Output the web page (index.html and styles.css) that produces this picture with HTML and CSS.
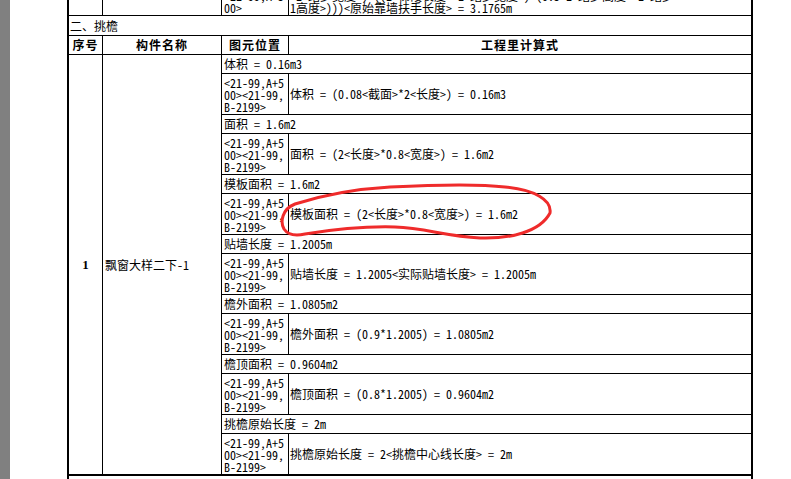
FILE: index.html
```html
<!DOCTYPE html>
<html lang="zh-CN">
<head>
<meta charset="utf-8">
<title>工程量计算式</title>
<link rel="stylesheet" href="styles.css">
</head>
<body>
<div class="screen">
  <div class="gutter"></div>
  <div class="page">
    <table class="sheet">
      <colgroup>
        <col class="c-no">
        <col class="c-name">
        <col class="c-pos">
        <col class="c-calc">
      </colgroup>
      <tbody>
        <tr class="row-prev">
          <td></td>
          <td></td>
          <td class="prev-pos">&lt;21-99,A+5<br>00&gt;</td>
          <td class="prev-calc last">*1&lt;踏步宽度&gt;)+((1&lt;梯段长度&gt;*1&lt;踏步宽度&gt;)+(0.5*1&lt;踏步高度&gt;*1&lt;踏步<br>1高度&gt;)))&lt;原始靠墙扶手长度&gt; = 3.1765m</td>
        </tr>
        <tr class="row-section">
          <td class="last" colspan="4">二、挑檐</td>
        </tr>
        <tr class="row-head">
          <td>序号</td>
          <td>构件名称</td>
          <td>图元位置</td>
          <td class="last">工程里计算式</td>
        </tr>
        <tr class="row-sum">
          <td class="item-no" rowspan="14">1</td>
          <td class="item-name" rowspan="14">飘窗大样二下-1</td>
          <td class="last" colspan="2">体积 = 0.16m3</td>
        </tr>
        <tr class="row-detail">
          <td class="pos">&lt;21-99,A+5<br>00&gt;&lt;21-99,<br>B-2199&gt;</td>
          <td class="calc last">体积 = (0.08&lt;截面&gt;*2&lt;长度&gt;) = 0.16m3</td>
        </tr>
        <tr class="row-sum">
          <td class="last" colspan="2">面积 = 1.6m2</td>
        </tr>
        <tr class="row-detail">
          <td class="pos">&lt;21-99,A+5<br>00&gt;&lt;21-99,<br>B-2199&gt;</td>
          <td class="calc last">面积 = (2&lt;长度&gt;*0.8&lt;宽度&gt;) = 1.6m2</td>
        </tr>
        <tr class="row-sum">
          <td class="last" colspan="2">模板面积 = 1.6m2</td>
        </tr>
        <tr class="row-detail">
          <td class="pos">&lt;21-99,A+5<br>00&gt;&lt;21-99,<br>B-2199&gt;</td>
          <td class="calc last">模板面积 = (2&lt;长度&gt;*0.8&lt;宽度&gt;) = 1.6m2</td>
        </tr>
        <tr class="row-sum">
          <td class="last" colspan="2">贴墙长度 = 1.2005m</td>
        </tr>
        <tr class="row-detail">
          <td class="pos">&lt;21-99,A+5<br>00&gt;&lt;21-99,<br>B-2199&gt;</td>
          <td class="calc last">贴墙长度 = 1.2005&lt;实际贴墙长度&gt; = 1.2005m</td>
        </tr>
        <tr class="row-sum">
          <td class="last" colspan="2">檐外面积 = 1.0805m2</td>
        </tr>
        <tr class="row-detail">
          <td class="pos">&lt;21-99,A+5<br>00&gt;&lt;21-99,<br>B-2199&gt;</td>
          <td class="calc last">檐外面积 = (0.9*1.2005) = 1.0805m2</td>
        </tr>
        <tr class="row-sum">
          <td class="last" colspan="2">檐顶面积 = 0.9604m2</td>
        </tr>
        <tr class="row-detail">
          <td class="pos">&lt;21-99,A+5<br>00&gt;&lt;21-99,<br>B-2199&gt;</td>
          <td class="calc last">檐顶面积 = (0.8*1.2005) = 0.9604m2</td>
        </tr>
        <tr class="row-sum">
          <td class="last" colspan="2">挑檐原始长度 = 2m</td>
        </tr>
        <tr class="row-detail">
          <td class="pos">&lt;21-99,A+5<br>00&gt;&lt;21-99,<br>B-2199&gt;</td>
          <td class="calc last">挑檐原始长度 = 2&lt;挑檐中心线长度&gt; = 2m</td>
        </tr>
        <tr class="row-section row-next">
          <td class="last" colspan="4">三、阳台栏板</td>
        </tr>
      </tbody>
    </table>
  </div>
  <svg class="ink" width="791" height="479" viewBox="0 0 791 479" aria-hidden="true">
    <path d="M 550 213 C 552 200, 535 190, 505 187 C 480 184, 430 185, 390 187 C 355 189, 320 196, 295 204 C 282 209, 280 222, 284 229 C 288 235, 296 236, 305 234 C 330 230, 360 226, 395 227 C 425 228, 445 236, 480 238 C 510 239, 540 232, 550 213 Z"/>
  </svg>
</div>
</body>
</html>
```

FILE: styles.css
```css
html, body {
  margin: 0;
  padding: 0;
  background: #ffffff;
}

body {
  font-family: "Noto Sans Mono CJK SC", "Liberation Mono", "Noto Sans CJK SC", monospace;
  font-size: 12px;
  color: #000000;
}

.screen {
  position: relative;
  width: 791px;
  height: 479px;
  overflow: hidden;
  display: flex;
  background: #ffffff;
}

.gutter {
  flex: none;
  width: 10px;
  background: #808080;
}

.page {
  flex: 1;
  padding-left: 57px;
}

.sheet {
  width: 686px;
  margin-top: -13px;
  table-layout: fixed;
  border-collapse: separate;
  border-spacing: 0;
  border-top: 2px solid #000;
  border-left: 2px solid #000;
  border-right: 2px solid #000;
}

.c-no { width: 34px; }
.c-name { width: 119px; }
.c-pos { width: 67px; }
.c-calc { width: 462px; }

.sheet td {
  padding: 0 0 0 2px;
  border-right: 1px solid #000;
  border-bottom: 1px solid #000;
  line-height: 18px;
  white-space: pre;
  overflow: hidden;
  vertical-align: middle;
}

.sheet td.last {
  border-right: 0;
}

.row-prev td {
  line-height: 12px;
  padding: 1px 0 1px 2px;
  vertical-align: bottom;
}

.row-prev td.prev-calc {
  padding-left: 1px;
}

.row-section td {
  line-height: 19px;
  padding-left: 1px;
}

.row-next td {
  border-top: 1px solid #000;
}

.row-head td {
  padding: 0;
  text-align: center;
  font-weight: bold;
  letter-spacing: 1px;
}

.sheet td.pos {
  line-height: 12px;
  padding: 3px 0 1px 2px;
}

.sheet td.calc {
  padding-left: 1px;
}

.sheet td.item-no {
  padding: 0;
  text-align: center;
  font-family: "Liberation Serif", serif;
  font-weight: bold;
  font-size: 13px;
}

.sheet td.item-name {
  padding-left: 2px;
}

.ink {
  position: absolute;
  left: 0;
  top: 0;
  pointer-events: none;
}

.ink path {
  fill: none;
  stroke: #ef2b2b;
  stroke-width: 3;
  stroke-linecap: round;
  stroke-linejoin: round;
}
```
